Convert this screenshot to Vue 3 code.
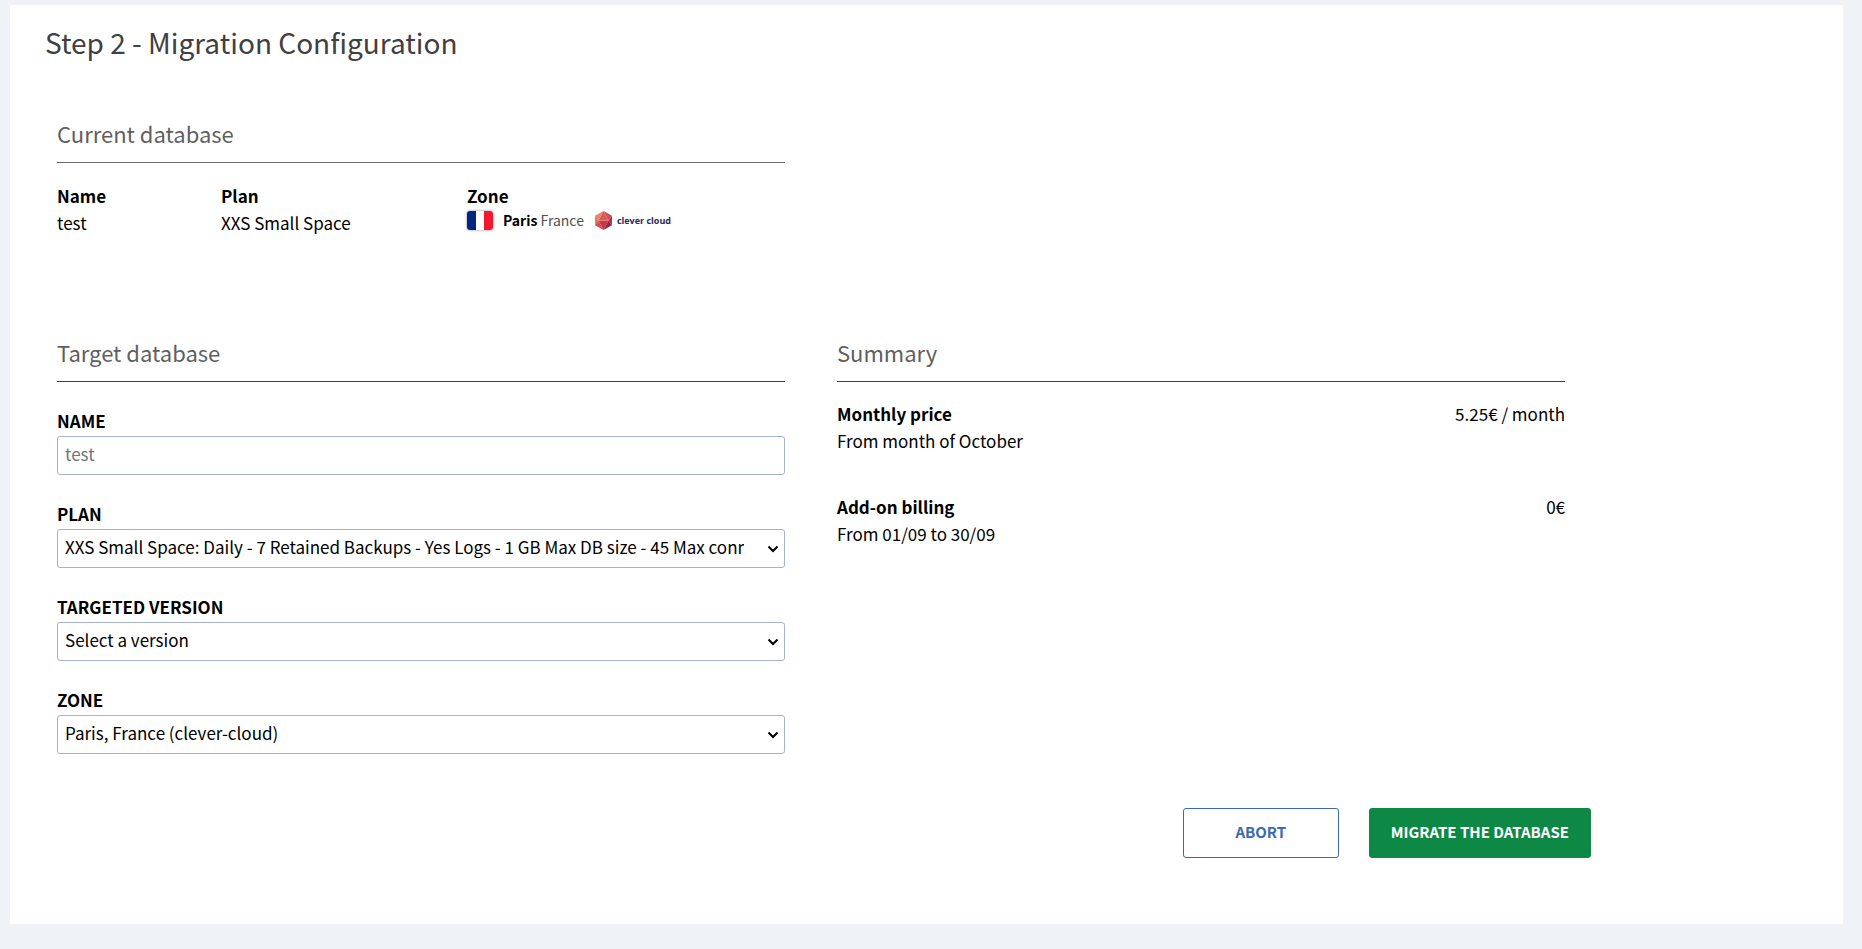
<script setup>
import { ref } from 'vue'

const name = ref('')
const plan = ref('xxs_sml')
const version = ref('')
const zone = ref('par')

const selects = [
  {
    id: 'plan',
    label: 'Plan',
    model: plan,
    options: [
      {
        value: 'xxs_sml',
        text: 'XXS Small Space: Daily - 7 Retained Backups - Yes Logs - 1 GB Max DB size - 45 Max connection limit',
      },
    ],
  },
  { id: 'version', label: 'Targeted version', model: version, options: [{ value: '', text: 'Select a version' }] },
  { id: 'zone', label: 'Zone', model: zone, options: [{ value: 'par', text: 'Paris, France (clever-cloud)' }] },
]

const summary = [
  { title: 'Monthly price', detail: 'From month of October', price: '5.25€ / month' },
  { title: 'Add-on billing', detail: 'From 01/09 to 30/09', price: '0€' },
]
</script>

<template>
  <main class="card">
    <h1>Step 2 - Migration Configuration</h1>

    <div class="columns">
      <section class="current">
        <h2 class="light">Current database</h2>
        <dl class="details">
          <div>
            <dt>Name</dt>
            <dd>test</dd>
          </div>
          <div>
            <dt>Plan</dt>
            <dd>XXS Small Space</dd>
          </div>
          <div>
            <dt>Zone</dt>
            <dd class="zone">
              <span class="flag" role="img" aria-label="French flag"></span>
              <span class="place"><strong>Paris</strong> France</span>
              <span class="brand">
                <svg width="17" height="19" viewBox="0 0 34 38" aria-hidden="true">
                  <path d="M17 0 0 9.500 7 19Z" fill="#ea8568" />
                  <path d="M17 0 7 19H27Z" fill="#dc5a52" />
                  <path d="M17 0 34 9.500 27 19Z" fill="#c9505a" />
                  <path d="M0 9.500 7 19 0 28.500Z" fill="#e5735f" />
                  <path d="M7 19 17 38 0 28.500Z" fill="#d4504f" />
                  <path d="M7 19H27L17 38Z" fill="#cb3442" />
                  <path d="M27 19 34 28.500 17 38Z" fill="#962650" />
                  <path d="M34 9.500V28.500L27 19Z" fill="#a8304f" />
                  <path d="M7 19H27" stroke="#e8908a" stroke-width="1" />
                </svg>
                <span>clever cloud</span>
              </span>
            </dd>
          </div>
        </dl>
      </section>
    </div>

    <form class="columns" @submit.prevent>
      <section>
        <h2>Target database</h2>
        <div class="fields">
          <div class="field">
            <label for="name">Name</label>
            <input id="name" v-model="name" type="text" placeholder="test" />
          </div>
          <div v-for="s in selects" :key="s.id" class="field">
            <label :for="s.id">{{ s.label }}</label>
            <div class="select">
              <select :id="s.id" v-model="s.model.value">
                <option v-for="o in s.options" :key="o.value" :value="o.value">{{ o.text }}</option>
              </select>
              <svg width="12" height="8" viewBox="0 0 12 8" aria-hidden="true">
                <path d="M1.500 1.500 6 6 10.500 1.500" fill="none" stroke="#000" stroke-width="2" />
              </svg>
            </div>
          </div>
        </div>
      </section>

      <section>
        <h2>Summary</h2>
        <ul class="summary">
          <li v-for="item in summary" :key="item.title">
            <div>
              <strong>{{ item.title }}</strong>
              <p>{{ item.detail }}</p>
            </div>
            <span>{{ item.price }}</span>
          </li>
        </ul>
      </section>

      <div class="actions">
        <button type="button" class="abort">Abort</button>
        <button type="submit" class="migrate">Migrate the database</button>
      </div>
    </form>
  </main>
</template>

<style>
body {
  background: #eff3f8;
}
</style>

<style scoped>
.card,
.card * {
  box-sizing: border-box;
}

.card {
  margin: 5px 19px 24px 10px;
  padding: 15px 35px 66px;
  border-radius: 2px;
  background: #fff;
  color: #000;
  font-family: 'Noto Sans CJK SC', 'Noto Sans', sans-serif;
  font-size: 17px;
  line-height: 27px;
}

h1,
h2,
dl,
dd,
ul,
p {
  margin: 0;
  padding: 0;
  font-weight: 400;
}

h1 {
  margin-bottom: 51px;
  color: #404040;
  font-size: 28px;
  line-height: 44px;
}

h2 {
  padding-bottom: 11px;
  border-bottom: 1px solid #404040;
  color: #5f5f5f;
  font-size: 22px;
  line-height: 36px;
}

h2.light {
  border-color: #6c6c6c;
}

.columns {
  display: grid;
  grid-template-columns: 1fr 1fr;
  column-gap: 52px;
  max-width: 1520px;
  padding-left: 12px;
}

.current {
  margin-bottom: 98px;
}

.details {
  display: grid;
  grid-template-columns: 164fr 246fr 318fr;
  margin-top: 19px;
}

dt {
  font-weight: 700;
}

.zone {
  display: flex;
  align-items: center;
  font-size: 14px;
  line-height: 23px;
}

.flag {
  width: 26px;
  height: 19px;
  margin-right: 10px;
  border-radius: 3px;
  background: linear-gradient(90deg, #00267f 0 9px, #fff 9px 17px, #f31830 17px);
  box-shadow: 0 0 3px #888;
}

.place {
  color: #505050;
}

.place strong {
  color: #000;
}

.brand {
  display: flex;
  align-items: center;
  gap: 5px;
  margin-left: 11px;
  color: #2b2763;
  font: 700 9px/16px 'Open Sans', sans-serif;
}

.fields {
  display: grid;
  gap: 25px;
  margin-top: 25px;
}

label {
  display: block;
  margin-bottom: 2px;
  font-weight: 700;
  text-transform: uppercase;
}

input,
select {
  width: 100%;
  height: 39px;
  padding: 0 7px 4px;
  border: 1px solid #a6b3cf;
  border-radius: 3px;
  background: #fff;
  color: #000;
  font: inherit;
}

input::placeholder {
  color: #757575;
}

.select {
  display: grid;
  align-items: center;
}

.select > * {
  grid-area: 1 / 1;
}

.select select {
  padding-right: 40px;
  appearance: none;
}

.select svg {
  justify-self: end;
  margin-right: 6px;
  pointer-events: none;
}

.summary {
  display: grid;
  gap: 39px;
  margin-top: 18px;
  list-style: none;
}

.summary li {
  display: flex;
  justify-content: space-between;
}

.actions {
  grid-column: 1 / -1;
  display: flex;
  justify-content: flex-end;
  gap: 30px;
  margin: 54px -26px 0 0;
}

button {
  height: 50px;
  padding: 0 21px 2px;
  border: 1px solid;
  border-radius: 3px;
  font: 700 15px/24px 'Noto Sans CJK SC', 'Noto Sans', sans-serif;
  text-transform: uppercase;
  cursor: pointer;
}

.abort {
  min-width: 156px;
  border-color: #3a6aaf;
  background: #fff;
  color: #3a6aaf;
}

.migrate {
  border-color: #0d8945;
  background: #0d8945;
  color: #fff;
}
</style>
